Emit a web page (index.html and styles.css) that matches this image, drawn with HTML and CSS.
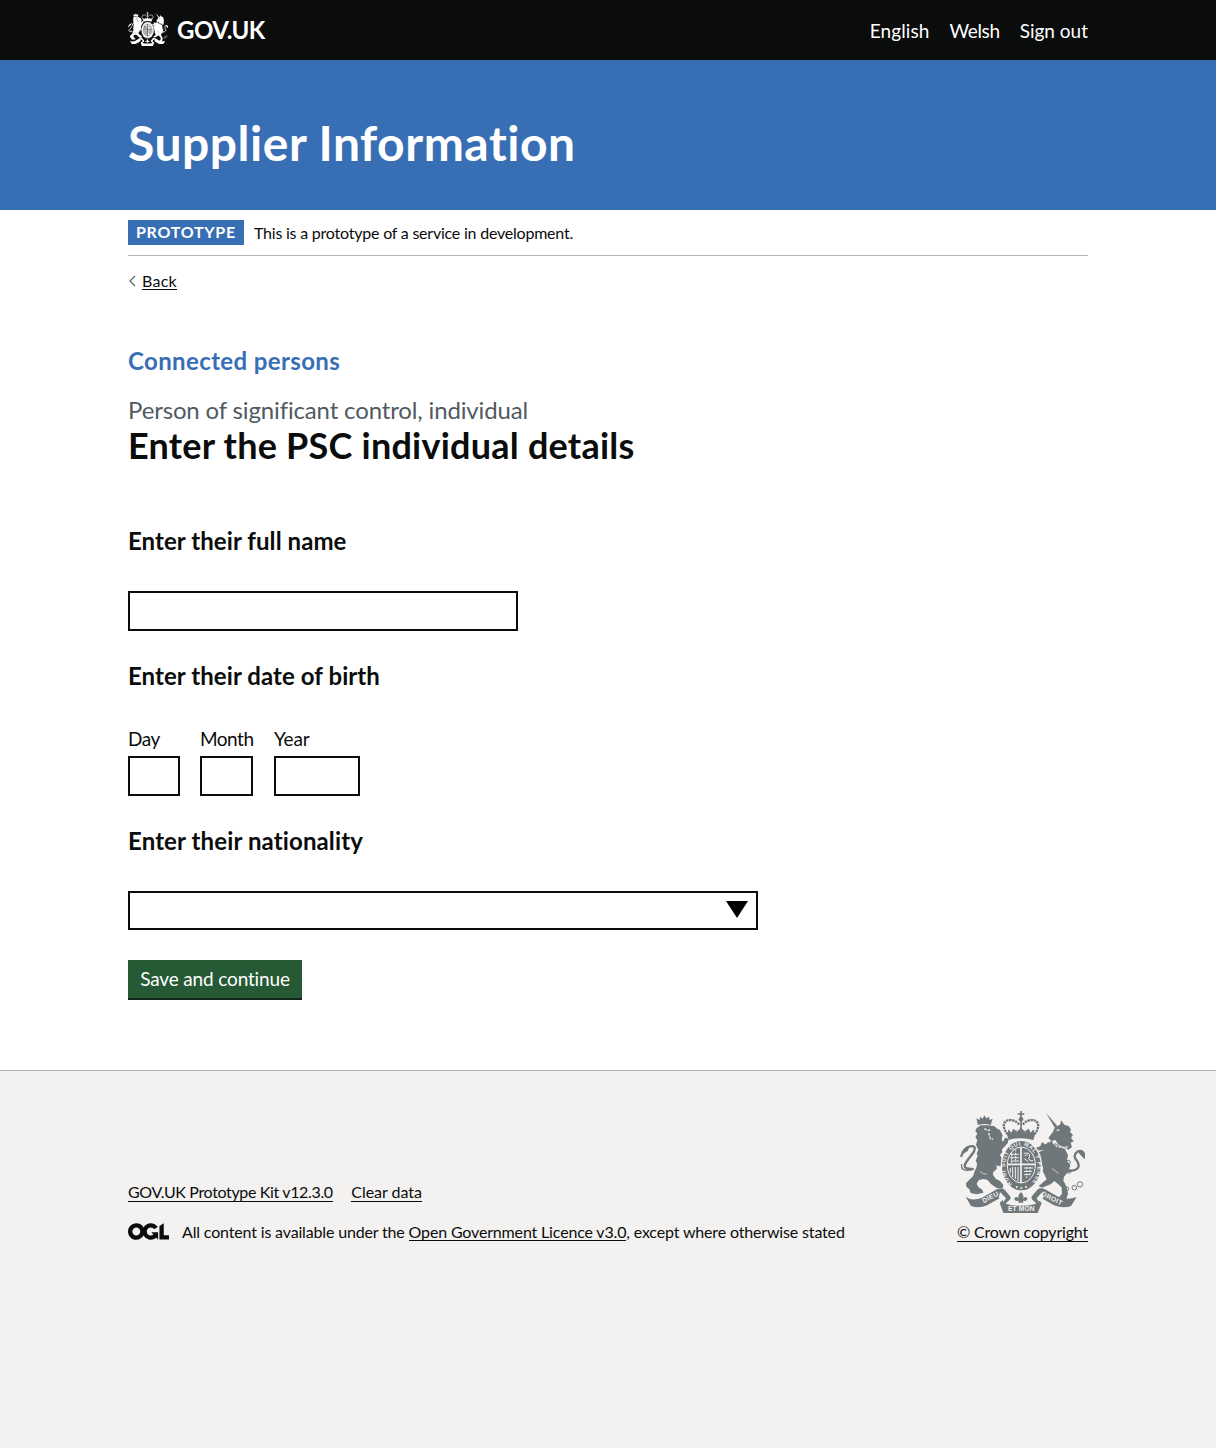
FILE: index.html
```html
<!DOCTYPE html>
<html lang="en">
<head>
<meta charset="utf-8">
<title>Enter the PSC individual details - Supplier Information</title>
<link rel="stylesheet" href="styles.css">
</head>
<body>
<svg class="sprite" aria-hidden="true">
  <symbol id="crest" viewBox="30 33 375 306" preserveAspectRatio="none">
    <!-- royal crown -->
    <g fill="none" stroke="currentColor">
      <path stroke-width="7" stroke-dasharray="7 2" d="M173 103C148 72 168 56 188 61q16 5 20 14M253 103C278 72 258 56 238 61q-16 5-20 14"/>
      <path stroke-width="5" d="M213 62v34M190 88q4 9 10 4M236 88q-4 9-10 4M203 42h20M213 33v22"/>
    </g>
    <g fill="currentColor">
      <circle cx="213" cy="58" r="7"/>
      <path d="M171 104l5-16 8 10 6-12 9 11 14-14 14 14 9-11 6 12 8-10 5 16-5 16q-37-11-74 0z"/>
      <!-- lion -->
      <path d="M84 75l-5-20 9 5 3-10 7 6 5-10 6 9 8-5 2 10 9-4-6 19q-19-6-38 0z"/>
      <path d="M80 84L92 76 114 76 132 78 142 86 150 90 158 106 155 116 160 132 154 142 157 156 150 165 157 178 152 190 139 196 141 206 130 216 129 224 137 236 150 243 160 254 158 264 140 264 122 251 112 239 98 237 86 241 80 251 85 261 97 269 100 278 80 283 62 279 58 268 49 260 48 250 57 240 69 229 74 214 80 200 81 190 77 182 83 168 80 160 85 150 78 134 82 120 76 112 82 101 76 93z"/>
      <path d="M140 140l20-16 5-11 11 3-3 14-22 24zM140 186l12-6 9 3 2 10-12 6-10-2z"/>
      <!-- unicorn -->
      <path d="M288 39l34 39-7 6z"/>
      <path d="M314 83l17-10 2-12 10 13 14 5 6 10-3 6 9 11-6 7 8 11-9 4 4 13-10 8-32-16-8-13-12 3-9-9 13-17z"/>
      <path d="M303 122l42 25 9 18-3 17 10 14-7 20-12 14-2 12 10 20 4 20-7 20-24-6 13-15-1-20-22-18-11 10-26 10-10-5 24-20-12-25 5-18-15-13-8 5-9-17-18-4-3-12 19-5 17 8 16-8z"/>
      <path d="M257 143l14-4 5-13 9 7 12-5 2 12-20 10-21 2zM275 188l20-11 3 11-14 7 6 10-10 2z"/>
    </g>
    <g fill="none" stroke="currentColor" stroke-width="7">
      <path d="M66 207C20 208 59 177 72 154q8-19-12-15-18 4-26 29M355 213q42-2 27-29-17-17 2-30 18-6 19 17" stroke-linecap="round"/>
      <path stroke-width="4" d="M72 207q-42 12-37-15"/>
    </g>
    <path fill="currentColor" d="M33 170q2-27 28-34l-8 17-18 11zM404 169q-2-20-21-19l5 11 16 17z"/>
    <g class="knock" fill="none" stroke-width="4">
      <path d="M103 86l11 5 9-2M116 99l5 17 8 1M308 127l13 12 16 4 16-2M320 91l11-2" stroke-dasharray="8 3"/>
      <path d="M90 214q9 11 21 8M306 205l20 16" stroke-width="2"/>
    </g>
    <g fill="none" stroke="currentColor" stroke-width="3">
      <circle cx="296" cy="134" r="6"/><circle cx="282" cy="164" r="6"/><circle cx="287" cy="183" r="6"/>
      <circle cx="355" cy="187" r="6"/><circle cx="357" cy="214" r="6"/><circle cx="337" cy="253" r="7"/>
      <circle cx="350" cy="266" r="6"/><circle cx="373" cy="263" r="7"/><circle cx="390" cy="253" r="8"/>
    </g>
    <!-- garter and shield -->
    <ellipse class="knock" cx="214" cy="197" rx="60" ry="76" fill="currentColor" stroke-width="4"/>
    <ellipse class="knock" cx="214" cy="195" rx="42" ry="54" fill="none" stroke-width="3"/>
    <path class="knock" d="M213 142v107M173 193h82" fill="none" stroke-width="5"/>
    <g class="knock" fill="none" stroke-width="3">
      <path d="M182 163h24M180 173h26M182 183h25M221 160q22-4 17 10t11 12M223 176l12 9M224 168l9-6M222 204h27M222 214h24M222 224h19M181 204v14M188 201v30M196 201v36M204 201v42"/>
      <path stroke-dasharray="5 4" d="M185 156v32M197 149v38M230 202v36M240 201v28"/>
    </g>
    <g class="knock-fill"><circle cx="200" cy="261" r="3"/><circle cx="214" cy="264" r="3"/><circle cx="228" cy="261" r="3"/></g>
    <!-- ribbon -->
    <path fill="currentColor" d="M47 290q17 14 48 4l48-28q12-4 21 3l15 18q9 9-7 18l-5 6q45 13 92 0l-5-6q-15-9-7-18l15-18q8-7 20-3l44 25q27 10 54 0l-17 27q-23 8-51-2l-38-22q-13-6-7 7l8 8-12 30q-52 13-103 0l-11-30 8-8q6-13-7-7l-39 22q-24 10-48 2z"/>
    <path class="knock-fill" d="M150 276l18 19-8 11q-2-10-14-12zM277 276l-17 19 7 11q2-10 14-12zM181 304q14-6 14-22l-6-6h48l-5 6q0 16 14 22-32 8-65 0z"/>
    <path fill="currentColor" d="M213 276q12 12 5 20 5-7 11-4 7 6-2 11l-8-1 1 6h-15l1-6-8 1q-9-5-2-11 6-3 11 4-6-8 6-20z"/>
  </symbol>
</svg>

<header class="header">
  <div class="width header-row">
    <a class="logo" href="#"><svg class="logo-crest"><use href="#crest"/></svg><span>GOV.UK</span></a>
    <nav class="header-nav"><a class="nav-english" href="#">English</a><a class="nav-welsh" href="#">Welsh</a><a href="#">Sign out</a></nav>
  </div>
</header>

<div class="hero"><div class="width"><p class="service-name">Supplier Information</p></div></div>

<div class="width">
  <div class="phase"><strong class="tag">PROTOTYPE</strong><span class="phase-text">This is a prototype of a service in development.</span></div>
  <a class="back" href="#"><svg class="chevron" viewBox="0 0 8 12"><path d="M7 1L2 6l5 5"/></svg><span>Back</span></a>

  <main class="main">
    <h2 class="section-title">Connected persons</h2>
    <p class="caption">Person of significant control, individual</p>
    <h1 class="page-title">Enter the PSC individual details</h1>
    <form>
      <label class="question" for="name">Enter their full name</label>
      <input class="field name" id="name">
      <fieldset class="dob">
        <legend class="question">Enter their date of birth</legend>
        <div class="date">
          <div><label class="day-label" for="day">Day</label><input class="field day" id="day"></div>
          <div><label class="month-label" for="month">Month</label><input class="field month" id="month"></div>
          <div><label for="year">Year</label><input class="field year" id="year"></div>
        </div>
      </fieldset>
      <label class="question question-nationality" for="nationality">Enter their nationality</label>
      <div class="combo">
        <input class="field nationality" id="nationality">
        <svg class="arrow" viewBox="0 0 22 17"><path d="M0 0h22L11 17z"/></svg>
      </div>
      <button class="button" type="button">Save and continue</button>
    </form>
  </main>
</div>

<footer class="footer">
  <div class="width footer-row">
    <div class="footer-meta">
      <div class="footer-links"><a class="kit" href="#">GOV.UK Prototype Kit v12.3.0</a><a class="clear" href="#">Clear data</a></div>
      <div class="licence">
        <svg class="ogl" viewBox="0 0 483.2 195.7"><path fill="currentColor" d="M421.5 142.8V.1l-50.7 32.3v161.1h112.4v-50.7zm-122.3-9.6A47.12 47.12 0 0 1 221 97.8c0-26 21.1-47.1 47.1-47.1 16.7 0 31.4 8.7 39.7 21.8l42.7-27.2A97.63 97.63 0 0 0 268.1 0c-36.5 0-68.3 20.1-85.1 49.7A98 98 0 0 0 97.8 0C43.9 0 0 43.9 0 97.8s43.9 97.8 97.8 97.8c36.5 0 68.3-20.1 85.1-49.7a97.76 97.76 0 0 0 149.6 25.4l19.4 22.2h3v-87.8h-80l24.3 27.5zM97.8 145c-26 0-47.1-21.1-47.1-47.1s21.1-47.1 47.1-47.1 47.1 21.1 47.1 47.1S123.8 145 97.8 145"/></svg>
        <span>All content is available under the <a href="#">Open Government Licence v3.0</a>, except where otherwise stated</span>
      </div>
    </div>
    <a class="copyright" href="#">
      <svg class="arms" viewBox="30 33 375 306">
        <use href="#crest" x="30" y="33" width="375" height="306"/>
        <path id="garter" d="M187 252A49 63 0 1 1 241 252" fill="none"/>
        <text class="motto garter-text"><textPath href="#garter" textLength="286">HONI SOIT QUI MAL Y PENSE</textPath></text>
        <text class="motto" transform="translate(101 310) rotate(-28)" textLength="52">DIEU</text>
        <text class="motto" x="174" y="332" textLength="80">ET MON</text>
        <text class="motto" transform="translate(273 286) rotate(27)" textLength="67">DROIT</text>
      </svg>
      <span>© Crown copyright</span>
    </a>
  </div>
</footer>
</body>
</html>
```

FILE: styles.css
```css
* { box-sizing: border-box; }
html { background: #f3f2f1; }
body {
  margin: 0;
  background: #fff;
  color: #0b0c0c;
  font: 400 16px/20px Lato, "Noto Sans", sans-serif;
  letter-spacing: -0.17px;
  font-variant-ligatures: none;
}
h1, h2, p, form, fieldset { margin: 0; padding: 0; border: 0; }
a { color: inherit; text-decoration: none; }
svg { display: block; }
.sprite { position: absolute; width: 0; height: 0; }
.width { width: 960px; margin: 0 auto; }

/* Coat of arms: cut-out details take the colour behind it */
.knock { stroke: var(--behind); }
.knock-fill { fill: var(--behind); }
.motto { fill: var(--behind); font: 700 20px "Liberation Sans", sans-serif; letter-spacing: 0; }
.garter-text { font-size: 16px; }

.header { height: 60px; background: #0b0c0c; color: #fff; }
.header-row { display: flex; justify-content: space-between; align-items: center; height: 60px; }
.logo { display: flex; align-items: center; gap: 9px; font-size: 24px; line-height: 30px; font-weight: 700; letter-spacing: -0.5px; }
.logo-crest { width: 40px; height: 34px; margin-top: -2px; --behind: #0b0c0c; }
.header-nav { display: flex; gap: 20px; font-size: 19px; line-height: 25px; letter-spacing: 0; }
.nav-english { letter-spacing: 0.1px; }
.nav-welsh { letter-spacing: -0.35px; }

.hero { height: 150px; padding-top: 58px; background: #386eb4; color: #fff; }
.service-name { font-size: 48px; line-height: 50px; font-weight: 700; letter-spacing: 0.52px; }

.phase { display: flex; align-items: center; gap: 10px; height: 46px; border-bottom: 1px solid #b1b4b6; }
.tag { width: 116px; height: 25px; padding-left: 8px; background: #386eb4; color: #fff; line-height: 24px; letter-spacing: 0.72px; }
.phase-text { letter-spacing: -0.22px; }
.back { display: flex; align-items: center; width: max-content; height: 20px; margin-top: 15px; letter-spacing: 0.25px; }
.back span { margin-top: -1px; box-shadow: inset 0 -1px #0b0c0c; line-height: 18px; }
.chevron { width: 8px; height: 12px; margin-right: 6px; fill: none; stroke: #505a5f; stroke-width: 1.1; }

.main { padding: 55px 0 70px; }
.section-title { color: #386eb4; font-size: 24px; line-height: 30px; letter-spacing: 0.38px; }
.caption { margin: 19px 0 0; color: #505a5f; font-size: 24px; line-height: 30px; letter-spacing: -0.15px; }
.page-title { margin-bottom: 61px; font-size: 36px; line-height: 40px; letter-spacing: 0.22px; }
.question { display: block; margin-bottom: 35px; padding: 0; font-size: 24px; line-height: 30px; font-weight: 700; letter-spacing: 0.07px; }
.question-nationality { letter-spacing: 0.12px; }
.field { display: block; height: 40px; border: 2px solid #0b0c0c; border-radius: 0; background: #fff; padding: 5px; }
.name { width: 390px; }
.dob { margin: 30px 0; min-width: 0; }
.date { display: grid; grid-template-columns: 52px 54px 86px; gap: 20px; font-size: 19px; line-height: 25px; }
.date label { display: block; margin-bottom: 5px; }
.date .day-label { letter-spacing: -0.5px; }
.date .month-label { letter-spacing: -0.5px; }
.day { width: 52px; }
.month { width: 53px; }
.year { width: 86px; }
.combo { position: relative; width: 630px; }
.nationality { width: 630px; height: 39px; }
.arrow { position: absolute; top: 10px; right: 10px; width: 22px; height: 17px; fill: #000; }
.button { display: block; width: 174px; height: 38px; margin: 30px 0 2px; padding: 0; border: 0; background: #265a34; box-shadow: 0 2px #10271a; color: #fff; font: 400 19px/38px Lato, sans-serif; letter-spacing: -0.15px; }

.footer { padding-top: 40px; min-height: 378px; border-top: 1px solid #b1b4b6; background: #f3f2f1; }
.footer-row { display: flex; justify-content: space-between; align-items: flex-end; }
.footer-links { display: flex; gap: 18.5px; margin-bottom: 20px; }
.footer a:not(.copyright), .copyright span { box-shadow: inset 0 -1px #0b0c0c; }
.kit { letter-spacing: -0.35px; }
.clear { letter-spacing: -0.04px; }
.licence { display: flex; align-items: center; gap: 13px; letter-spacing: -0.16px; }
.ogl { width: 41px; height: 17px; margin-top: -2px; }
.copyright { display: flex; flex-direction: column; align-items: flex-end; }
.copyright span { letter-spacing: -0.19px; }
.arms { width: 125px; height: 102px; margin: 0 3px 9px 0; color: #6f777b; --behind: #f3f2f1; }
```
